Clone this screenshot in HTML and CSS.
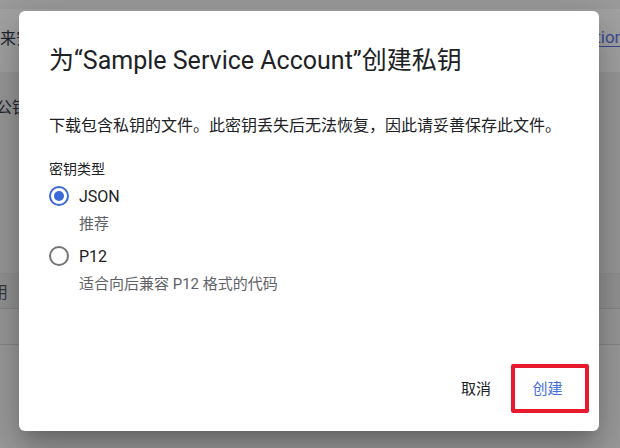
FILE: index.html
```html
<!DOCTYPE html>
<html lang="zh-CN">
<head>
<meta charset="utf-8">
<title>创建私钥</title>
<link rel="stylesheet" href="styles.css">
</head>
<body>
<div class="page">
  <div class="topstrip"></div>
  <div class="band">
    <span class="bg-text">来安全</span>
    <span class="bg-link">tion</span>
  </div>
  <div class="section">
    <span class="bg-text shift">公钥</span>
  </div>
  <div class="thead"><span class="bg-text shift2">使用</span></div>
  <div class="trow"></div>
  <div class="rest"></div>
</div>

<div class="dialog">
  <h1 class="title">为“Sample Service Account”创建私钥</h1>
  <p class="desc">下载包含私钥的文件。此密钥丢失后无法恢复，因此请妥善保存此文件。</p>
  <div class="label">密钥类型</div>
  <div class="option">
    <span class="radio checked"></span>
    <span class="opt-name">JSON</span>
  </div>
  <div class="hint">推荐</div>
  <div class="option">
    <span class="radio"></span>
    <span class="opt-name">P12</span>
  </div>
  <div class="hint">适合向后兼容 P12 格式的代码</div>
  <div class="footer">
    <button class="btn cancel">取消</button>
    <div class="highlight"><button class="btn create">创建</button></div>
  </div>
</div>
</body>
</html>
```

FILE: styles.css
```css
* { box-sizing: border-box; }
html, body { margin: 0; padding: 0; }
body {
  width: 620px;
  height: 448px;
  overflow: hidden;
  font-family: Roboto, "Noto Sans CJK SC", sans-serif;
  background: #989898;
  position: relative;
}
.page { display: flex; flex-direction: column; height: 448px; }
.topstrip { height: 9px; background: #9b9b9b; }
.band {
  height: 63px;
  background: #a3a3a3;
  display: flex;
  align-items: center;
  justify-content: space-between;
  padding-bottom: 8px;
}
.bg-text { font-size: 16px; color: #1e2630; white-space: nowrap; }
.shift { margin-left: -4px; }
.shift2 { margin-left: -24px; color: #3a3a3a; }
.bg-link {
  font-size: 17px;
  color: #3a4c96;
  text-decoration: underline;
  text-underline-offset: 3px;
  margin-right: -4px;
}
.section { height: 201px; background: #999999; padding-top: 22px; }
.thead {
  height: 36px;
  background: #949494;
  border-top: 1px solid #909090;
  border-bottom: 1px solid #878787;
  display: flex;
  align-items: center;
}
.trow { height: 36px; background: #999999; border-bottom: 1px solid #878787; }
.rest { flex: 1; background: #9c9c9c; }

.dialog {
  position: absolute;
  left: 19px;
  top: 11px;
  width: 580px;
  height: 420px;
  background: #fff;
  border-radius: 6px;
  box-shadow: 0 11px 15px -7px rgba(0,0,0,.2), 0 24px 38px 3px rgba(0,0,0,.14), 0 9px 46px 8px rgba(0,0,0,.12);
  padding: 34px 10px 18px 30px;
  display: flex;
  flex-direction: column;
  color: #202124;
}
.title {
  margin: 0;
  font-size: 25px;
  line-height: 32px;
  font-weight: 400;
  height: 32px;
  white-space: nowrap;
}
.desc {
  margin: 37px 0 0;
  font-size: 16px;
  line-height: 24px;
  height: 24px;
  white-space: nowrap;
}
.label {
  margin-top: 21px;
  font-size: 14px;
  line-height: 20px;
  height: 20px;
}
.option {
  display: flex;
  align-items: center;
  height: 24px;
  margin-top: 5px;
}
.radio {
  width: 20px;
  height: 20px;
  border: 2px solid #757575;
  border-radius: 50%;
  display: flex;
  align-items: center;
  justify-content: center;
  flex: none;
}
.radio.checked { border-color: #3d68d8; }
.radio.checked::after {
  content: "";
  width: 10px;
  height: 10px;
  border-radius: 50%;
  background: #3d68d8;
}
.opt-name { margin-left: 10px; font-size: 16px; color: #202124; }
.hint {
  margin-left: 30px;
  margin-top: 6px;
  font-size: 15px;
  line-height: 20px;
  height: 20px;
  color: #5f6368;
  white-space: nowrap;
}
.hint + .option { margin-top: 10px; }
.footer {
  margin-top: auto;
  display: flex;
  justify-content: flex-end;
  align-items: center;
  gap: 20px;
}
.btn {
  font-family: Roboto, "Noto Sans CJK SC", sans-serif;
  font-size: 15px;
  background: none;
  border: none;
  padding: 0;
  line-height: 20px;
}
.cancel { color: #202124; }
.highlight {
  width: 78px;
  height: 49px;
  border: 4px solid #e8192c;
  border-radius: 2px;
  display: flex;
  align-items: center;
  justify-content: center;
  padding-right: 5px;
}
.create { color: #4470d9; }
```
